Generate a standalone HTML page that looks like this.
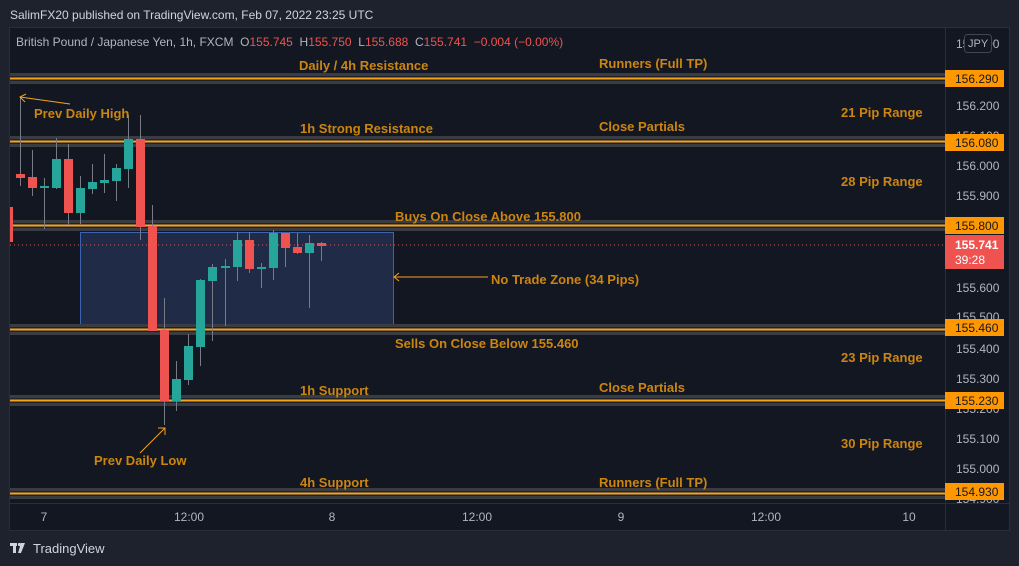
<!DOCTYPE html>
<html><head><meta charset="utf-8"><style>
html,body{margin:0;padding:0;width:1019px;height:566px;background:#1e222d;overflow:hidden;font-family:"Liberation Sans",sans-serif}
svg{position:absolute;left:0;top:0}
</style></head><body>
<svg width="1019" height="566" xmlns="http://www.w3.org/2000/svg" font-family="Liberation Sans, sans-serif">
<rect x="0" y="0" width="1019" height="566" fill="#1e222d"/>
<text x="10" y="19" font-size="12" fill="#d1d4dc">SalimFX20 published on TradingView.com, Feb 07, 2022 23:25 UTC</text>
<rect x="9.5" y="27.5" width="1000" height="503" fill="#131722" stroke="#2a2e39"/>
<line x1="945.5" y1="28" x2="945.5" y2="530" stroke="#2a2e39"/>
<line x1="10" y1="503.5" x2="1009" y2="503.5" stroke="#2a2e39"/>
<text x="16" y="46" font-size="12" fill="#b2b5be" xml:space="preserve">British Pound / Japanese Yen, 1h, FXCM  O<tspan fill="#ef5350">155.745</tspan>  H<tspan fill="#ef5350">155.750</tspan>  L<tspan fill="#ef5350">155.688</tspan>  C<tspan fill="#ef5350">155.741</tspan>  <tspan fill="#ef5350">−0.004 (−0.00%)</tspan></text>

<rect x="80.5" y="232.5" width="313" height="92" fill="#1f2b47" stroke="#3a64b0"/>
<line x1="10" y1="245" x2="945" y2="245" stroke="#ef5350" stroke-dasharray="1,3" stroke-width="1"/>

<g>
<rect x="10" y="73" width="935" height="11" fill="#3a3c43"/><rect x="10" y="76" width="935" height="5" fill="#202229"/><rect x="10" y="77.5" width="935" height="2" fill="#f7a21b"/>
<rect x="10" y="136" width="935" height="11" fill="#3a3c43"/><rect x="10" y="139" width="935" height="5" fill="#202229"/><rect x="10" y="140.5" width="935" height="2" fill="#f7a21b"/>
<rect x="10" y="220" width="935" height="11" fill="#3a3c43"/><rect x="10" y="223" width="935" height="5" fill="#202229"/><rect x="10" y="224.5" width="935" height="2" fill="#f7a21b"/>
<rect x="10" y="324" width="935" height="11" fill="#3a3c43"/><rect x="10" y="327" width="935" height="5" fill="#202229"/><rect x="10" y="328.5" width="935" height="2" fill="#f7a21b"/>
<rect x="10" y="395" width="935" height="11" fill="#3a3c43"/><rect x="10" y="398" width="935" height="5" fill="#202229"/><rect x="10" y="399.5" width="935" height="2" fill="#f7a21b"/>
<rect x="10" y="488" width="935" height="11" fill="#3a3c43"/><rect x="10" y="491" width="935" height="5" fill="#202229"/><rect x="10" y="492.5" width="935" height="2" fill="#f7a21b"/>
</g>

<g stroke="#787b86" stroke-width="1">
<line x1="20.5" y1="97" x2="20.5" y2="186"/><line x1="32.5" y1="150" x2="32.5" y2="196"/><line x1="44.5" y1="178" x2="44.5" y2="229"/><line x1="56.5" y1="138" x2="56.5" y2="189"/><line x1="68.5" y1="144" x2="68.5" y2="225"/><line x1="80.5" y1="176" x2="80.5" y2="224"/><line x1="92.5" y1="164" x2="92.5" y2="194"/><line x1="104.5" y1="154" x2="104.5" y2="193"/><line x1="116.5" y1="164" x2="116.5" y2="201"/><line x1="128.5" y1="115" x2="128.5" y2="188"/><line x1="140.5" y1="115" x2="140.5" y2="240"/><line x1="152.5" y1="205" x2="152.5" y2="331"/><line x1="164.5" y1="298" x2="164.5" y2="425"/><line x1="176.5" y1="361" x2="176.5" y2="411"/><line x1="188.5" y1="334" x2="188.5" y2="385"/><line x1="200.5" y1="279" x2="200.5" y2="366"/><line x1="212.5" y1="264" x2="212.5" y2="341"/><line x1="225.5" y1="259" x2="225.5" y2="326"/><line x1="237.5" y1="232" x2="237.5" y2="281"/><line x1="249.5" y1="232" x2="249.5" y2="273"/><line x1="261.5" y1="263" x2="261.5" y2="288"/><line x1="273.5" y1="230" x2="273.5" y2="280"/><line x1="285.5" y1="233" x2="285.5" y2="267"/><line x1="297.5" y1="233" x2="297.5" y2="254"/><line x1="309.5" y1="235" x2="309.5" y2="308"/><line x1="321.5" y1="242" x2="321.5" y2="261"/>
</g>
<g fill="#ef5350">
<rect x="10" y="207" width="3" height="35"/>
<rect x="16" y="174" width="9" height="4"/><rect x="28" y="177" width="9" height="11"/><rect x="64" y="159" width="9" height="54"/><rect x="136" y="139" width="9" height="88"/><rect x="148" y="226" width="9" height="105"/><rect x="160" y="330" width="9" height="71"/><rect x="245" y="240" width="9" height="29"/><rect x="281" y="233" width="9" height="15"/><rect x="293" y="247" width="9" height="6"/><rect x="317" y="243" width="9" height="3"/>
</g>
<g fill="#26a69a">
<rect x="40" y="186" width="9" height="2"/><rect x="52" y="159" width="9" height="29"/><rect x="76" y="188" width="9" height="25"/><rect x="88" y="182" width="9" height="7"/><rect x="100" y="180" width="9" height="3"/><rect x="112" y="168" width="9" height="13"/><rect x="124" y="139" width="9" height="30"/><rect x="172" y="379" width="9" height="22"/><rect x="184" y="346" width="9" height="34"/><rect x="196" y="280" width="9" height="67"/><rect x="208" y="267" width="9" height="14"/><rect x="221" y="266" width="9" height="2"/><rect x="233" y="240" width="9" height="27"/><rect x="257" y="267" width="9" height="2"/><rect x="269" y="233" width="9" height="35"/><rect x="305" y="243" width="9" height="10"/>
</g>

<g stroke="#f7a21b" stroke-width="1" fill="none">
<line x1="20" y1="97" x2="70" y2="104"/><polyline points="26,94 20,97 25,102"/>
<line x1="140" y1="453" x2="165" y2="428"/><polyline points="158,428 165,428 165,435"/>
<line x1="394" y1="277" x2="488" y2="277"/><polyline points="399,273 394,277 399,281"/>
</g>

<g font-size="13" font-weight="bold" fill="#cc850f">
<text x="299" y="70">Daily / 4h Resistance</text>
<text x="599" y="68">Runners (Full TP)</text>
<text x="34" y="118">Prev Daily High</text>
<text x="841" y="117">21 Pip Range</text>
<text x="300" y="133">1h Strong Resistance</text>
<text x="599" y="131">Close Partials</text>
<text x="841" y="186">28 Pip Range</text>
<text x="395" y="221">Buys On Close Above 155.800</text>
<text x="491" y="284">No Trade Zone (34 Pips)</text>
<text x="395" y="348">Sells On Close Below 155.460</text>
<text x="841" y="362">23 Pip Range</text>
<text x="300" y="395">1h Support</text>
<text x="599" y="392">Close Partials</text>
<text x="841" y="448">30 Pip Range</text>
<text x="94" y="465">Prev Daily Low</text>
<text x="300" y="487">4h Support</text>
<text x="599" y="487">Runners (Full TP)</text>
</g>

<g font-size="12" fill="#b2b5be">
<text x="956" y="48">156.300</text>
<text x="956" y="110">156.200</text>
<text x="956" y="140">156.100</text>
<text x="956" y="170">156.000</text>
<text x="956" y="200">155.900</text>
<text x="956" y="292">155.600</text>
<text x="956" y="321">155.500</text>
<text x="956" y="353">155.400</text>
<text x="956" y="383">155.300</text>
<text x="956" y="413">155.200</text>
<text x="956" y="443">155.100</text>
<text x="956" y="473">155.000</text>
<text x="956" y="503">154.900</text>
</g>
<rect x="964.5" y="34.5" width="27" height="18" rx="3" fill="#131722" stroke="#434651"/>
<text x="968" y="47" font-size="11" fill="#b2b5be">JPY</text>
<g font-size="12" fill="#131722">
<rect x="945" y="70" width="59" height="17" fill="#ff9800"/><text x="955" y="83">156.290</text>
<rect x="945" y="134" width="59" height="17" fill="#ff9800"/><text x="955" y="147">156.080</text>
<rect x="945" y="217" width="59" height="17" fill="#ff9800"/><text x="955" y="230">155.800</text>
<rect x="945" y="319" width="59" height="17" fill="#ff9800"/><text x="955" y="332">155.460</text>
<rect x="945" y="392" width="59" height="17" fill="#ff9800"/><text x="955" y="405">155.230</text>
<rect x="945" y="483" width="59" height="17" fill="#ff9800"/><text x="955" y="496">154.930</text>
</g>
<rect x="945" y="235" width="59" height="34" fill="#ef5350"/>
<text x="955" y="249" font-size="12" font-weight="bold" fill="#fff">155.741</text>
<text x="955" y="264" font-size="12" fill="#fff">39:28</text>

<g font-size="12" fill="#b2b5be" text-anchor="middle">
<text x="44" y="521">7</text><text x="189" y="521">12:00</text><text x="332" y="521">8</text><text x="477" y="521">12:00</text><text x="621" y="521">9</text><text x="766" y="521">12:00</text><text x="909" y="521">10</text>
</g>

<g fill="#d1d4dc">
<rect x="10" y="543" width="7" height="3"/><rect x="13" y="543" width="3" height="10"/>
<circle cx="19.5" cy="544.5" r="1.6"/><polygon points="21,543 25,543 21,553 18,553"/>
</g>
<text x="33" y="553" font-size="13" fill="#d1d4dc">TradingView</text>
</svg>
</body></html>
